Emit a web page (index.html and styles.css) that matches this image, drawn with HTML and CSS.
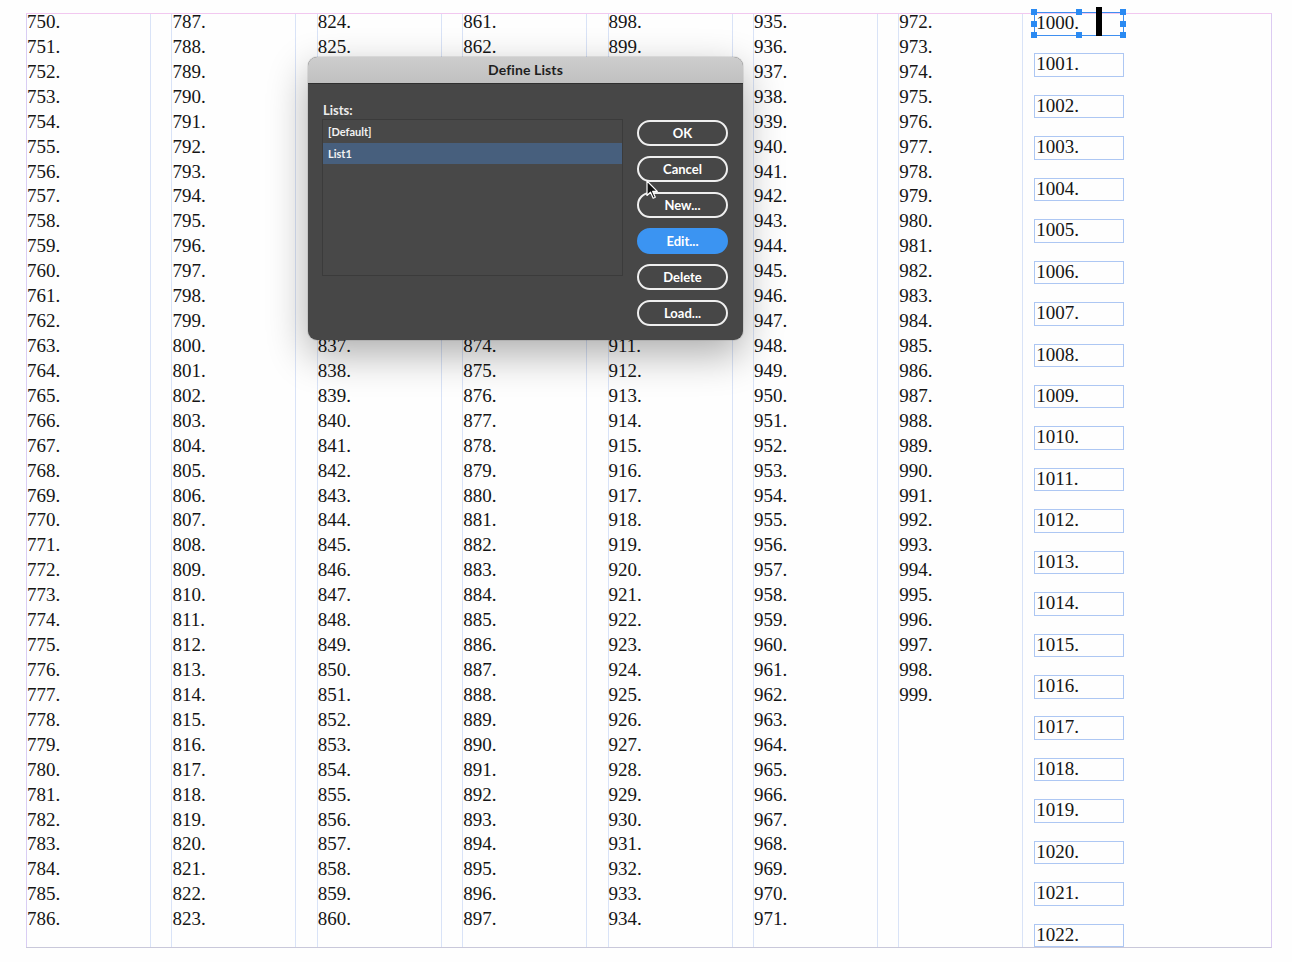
FILE: index.html
```html
<!DOCTYPE html>
<html>
<head>
<meta charset="utf-8">
<title>Define Lists</title>
<link rel="stylesheet" href="styles.css">
</head>
<body>
<div class="frame">
  <div class="col first"><div class="lines">750.<br>751.<br>752.<br>753.<br>754.<br>755.<br>756.<br>757.<br>758.<br>759.<br>760.<br>761.<br>762.<br>763.<br>764.<br>765.<br>766.<br>767.<br>768.<br>769.<br>770.<br>771.<br>772.<br>773.<br>774.<br>775.<br>776.<br>777.<br>778.<br>779.<br>780.<br>781.<br>782.<br>783.<br>784.<br>785.<br>786.</div></div>
  <div class="col"><div class="lines">787.<br>788.<br>789.<br>790.<br>791.<br>792.<br>793.<br>794.<br>795.<br>796.<br>797.<br>798.<br>799.<br>800.<br>801.<br>802.<br>803.<br>804.<br>805.<br>806.<br>807.<br>808.<br>809.<br>810.<br>811.<br>812.<br>813.<br>814.<br>815.<br>816.<br>817.<br>818.<br>819.<br>820.<br>821.<br>822.<br>823.</div></div>
  <div class="col"><div class="lines">824.<br>825.<br>826.<br>827.<br>828.<br>829.<br>830.<br>831.<br>832.<br>833.<br>834.<br>835.<br>836.<br>837.<br>838.<br>839.<br>840.<br>841.<br>842.<br>843.<br>844.<br>845.<br>846.<br>847.<br>848.<br>849.<br>850.<br>851.<br>852.<br>853.<br>854.<br>855.<br>856.<br>857.<br>858.<br>859.<br>860.</div></div>
  <div class="col"><div class="lines">861.<br>862.<br>863.<br>864.<br>865.<br>866.<br>867.<br>868.<br>869.<br>870.<br>871.<br>872.<br>873.<br>874.<br>875.<br>876.<br>877.<br>878.<br>879.<br>880.<br>881.<br>882.<br>883.<br>884.<br>885.<br>886.<br>887.<br>888.<br>889.<br>890.<br>891.<br>892.<br>893.<br>894.<br>895.<br>896.<br>897.</div></div>
  <div class="col"><div class="lines">898.<br>899.<br>900.<br>901.<br>902.<br>903.<br>904.<br>905.<br>906.<br>907.<br>908.<br>909.<br>910.<br>911.<br>912.<br>913.<br>914.<br>915.<br>916.<br>917.<br>918.<br>919.<br>920.<br>921.<br>922.<br>923.<br>924.<br>925.<br>926.<br>927.<br>928.<br>929.<br>930.<br>931.<br>932.<br>933.<br>934.</div></div>
  <div class="col"><div class="lines">935.<br>936.<br>937.<br>938.<br>939.<br>940.<br>941.<br>942.<br>943.<br>944.<br>945.<br>946.<br>947.<br>948.<br>949.<br>950.<br>951.<br>952.<br>953.<br>954.<br>955.<br>956.<br>957.<br>958.<br>959.<br>960.<br>961.<br>962.<br>963.<br>964.<br>965.<br>966.<br>967.<br>968.<br>969.<br>970.<br>971.</div></div>
  <div class="col seventh"><div class="lines">972.<br>973.<br>974.<br>975.<br>976.<br>977.<br>978.<br>979.<br>980.<br>981.<br>982.<br>983.<br>984.<br>985.<br>986.<br>987.<br>988.<br>989.<br>990.<br>991.<br>992.<br>993.<br>994.<br>995.<br>996.<br>997.<br>998.<br>999.</div></div>
  <div class="boxes">
    <div class="box selected">1000.
      <span class="caret"></span>
      <span class="h h-tl"></span><span class="h h-tm"></span><span class="h h-tr"></span>
      <span class="h h-ml"></span><span class="h h-mr"></span>
      <span class="h h-bl"></span><span class="h h-bm"></span><span class="h h-br"></span>
    </div>
    <div class="box">1001.</div>
    <div class="box">1002.</div>
    <div class="box">1003.</div>
    <div class="box">1004.</div>
    <div class="box">1005.</div>
    <div class="box">1006.</div>
    <div class="box">1007.</div>
    <div class="box">1008.</div>
    <div class="box">1009.</div>
    <div class="box">1010.</div>
    <div class="box">1011.</div>
    <div class="box">1012.</div>
    <div class="box">1013.</div>
    <div class="box">1014.</div>
    <div class="box">1015.</div>
    <div class="box">1016.</div>
    <div class="box">1017.</div>
    <div class="box">1018.</div>
    <div class="box">1019.</div>
    <div class="box">1020.</div>
    <div class="box">1021.</div>
    <div class="box">1022.</div>
  </div>
</div>

<div class="dialog">
  <div class="titlebar">Define Lists</div>
  <div class="dbody">
    <div class="left">
      <div class="label">Lists:</div>
      <div class="listbox">
        <div class="row">[Default]</div>
        <div class="row sel">List1</div>
      </div>
    </div>
    <div class="buttons">
      <div class="btn">OK</div>
      <div class="btn">Cancel</div>
      <div class="btn">New...</div>
      <div class="btn primary">Edit...</div>
      <div class="btn">Delete</div>
      <div class="btn">Load...</div>
    </div>
  </div>
</div>

<svg class="cursor" width="13" height="20" viewBox="0 0 13 20">
  <path d="M1 1 L1 15.5 L4.5 12.2 L7.2 18.2 L9.3 17.3 L6.7 11.4 L11.3 11.4 Z" fill="#111" stroke="#fff" stroke-width="1.2" stroke-linejoin="round"/>
</svg>
</body>
</html>
```
FILE: styles.css
```css
html, body {
  margin: 0;
  padding: 0;
  background: #fefefe;
}
body {
  width: 1292px;
  height: 962px;
  position: relative;
  overflow: hidden;
  font-family: "Liberation Serif", "Times New Roman", serif;
  color: #151515;
}
.frame {
  box-sizing: border-box;
  margin: 13px 0 0 26px;
  width: 1246px;
  height: 935px;
  border-top: 1px solid #f2c8f0;
  border-right: 1px solid #dccbf2;
  border-bottom: 1px solid #c9c8da;
  display: flex;
  align-items: stretch;
}
.col {
  box-sizing: border-box;
  width: 125px;
  flex: none;
  margin-right: 20.4px;
  border-left: 1px solid #d9e3f7;
  border-right: 1px solid #d9e3f7;
}
.col.first {
  border-left-color: #d9cdf3;
}
.col.seventh {
  margin-right: 11px;
}
.lines {
  margin-top: -4px;
  font-size: 19px;
  line-height: 24.92px;
  white-space: nowrap;
}
.boxes {
  flex: none;
  margin-top: -2px;
  display: flex;
  flex-direction: column;
  gap: 17.9px;
}
.box {
  position: relative;
  box-sizing: border-box;
  width: 90px;
  height: 24px;
  border: 1px solid #adc7f3;
  padding-left: 1px;
  font-size: 19px;
  line-height: 19px;
  white-space: nowrap;
}
.box.selected {
  border-color: #3f8ff0;
}
.caret {
  position: absolute;
  left: 61px;
  top: -6px;
  width: 6px;
  height: 29px;
  background: #000;
}
.h {
  position: absolute;
  width: 6px;
  height: 6px;
  background: #2a8af2;
}
.h-tl { left: -4px; top: -4px; }
.h-tm { left: 41px; top: -4px; }
.h-tr { left: 85px; top: -4px; }
.h-ml { left: -4px; top: 8px; }
.h-mr { left: 85px; top: 8px; }
.h-bl { left: -4px; top: 19px; }
.h-bm { left: 41px; top: 19px; }
.h-br { left: 85px; top: 19px; }

/* dialog */
.dialog {
  position: absolute;
  left: 308px;
  top: 57px;
  width: 435px;
  height: 283px;
  border-radius: 9px;
  background: #474747;
  overflow: hidden;
  box-shadow: 0 14px 40px rgba(0, 0, 0, 0.33), 0 0 0 1px rgba(0, 0, 0, 0.08);
  font-family: "Lato", "Open Sans", sans-serif;
}
.titlebar {
  height: 26px;
  border-bottom: 1px solid #2f2f2f;
  background: linear-gradient(#cdcdcd, #c0c0c0);
  color: #1e1e1e;
  font-weight: 700;
  font-size: 14px;
  line-height: 26px;
  text-align: center;
  letter-spacing: 0.1px;
}
.dbody {
  display: flex;
  padding: 19px 15px 0 14px;
}
.left {
  width: 302px;
  display: flex;
  flex-direction: column;
}
.label {
  margin-left: 1px;
  color: #ececec;
  font-weight: 700;
  font-size: 13px;
  line-height: 15px;
  height: 15px;
  margin-bottom: 1px;
}
.listbox {
  box-sizing: border-box;
  height: 157px;
  border: 1px solid #3b3b3b;
  background: #484848;
  padding-top: 1px;
}
.row {
  height: 21.5px;
  line-height: 21.5px;
  padding-left: 5px;
  color: #f2f2f2;
  font-size: 11px;
  font-weight: 700;
}
.row.sel {
  background: #475f7d;
}
.buttons {
  margin-left: 14px;
  margin-top: 17px;
  display: flex;
  flex-direction: column;
  gap: 10px;
}
.btn {
  box-sizing: border-box;
  width: 91px;
  height: 26px;
  border: 2px solid #efefef;
  border-radius: 13px;
  color: #ffffff;
  font-size: 13px;
  font-weight: 700;
  line-height: 23px;
  text-align: center;
}
.btn.primary {
  background: #3b94f2;
  border-color: #3b94f2;
}
.cursor {
  position: absolute;
  left: 646px;
  top: 180px;
}
```
